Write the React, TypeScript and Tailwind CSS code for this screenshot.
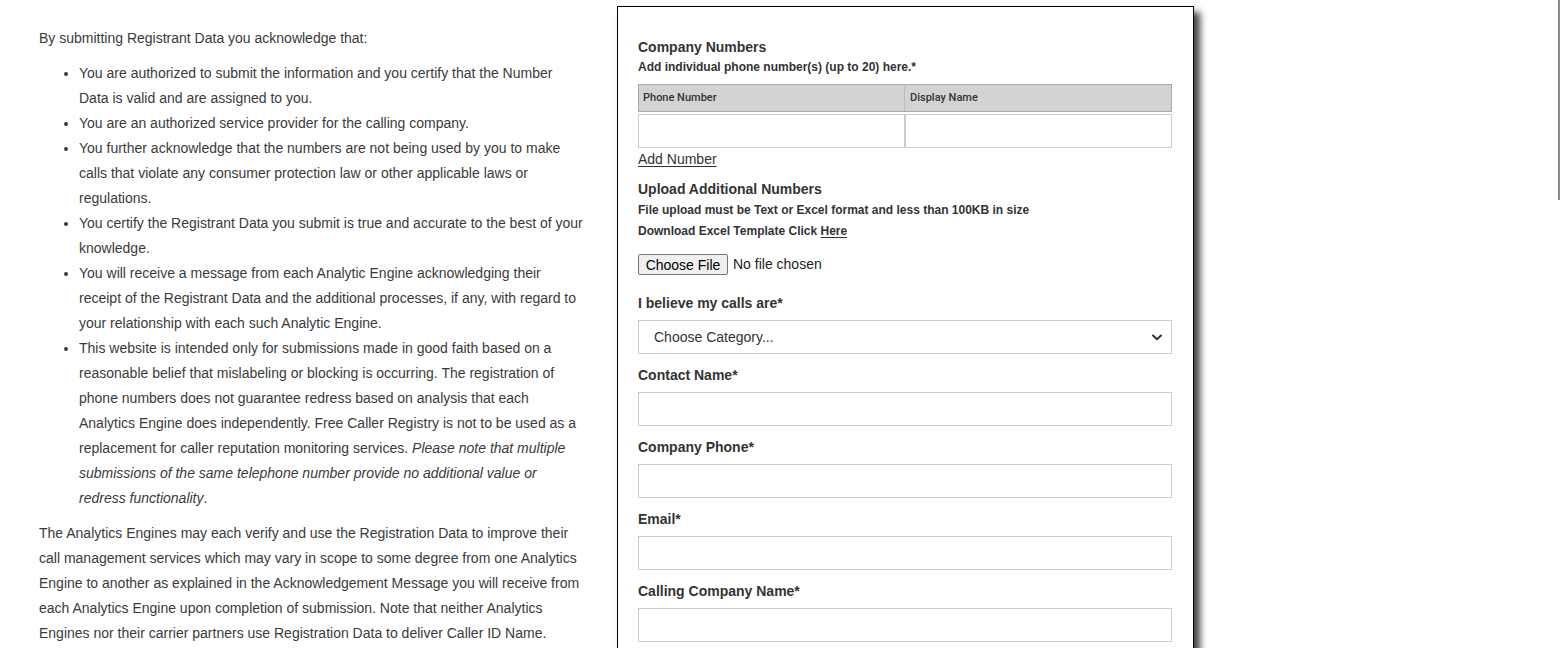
const bullets: React.ReactNode[] = [
  "You are authorized to submit the information and you certify that the Number Data is valid and are assigned to you.",
  "You are an authorized service provider for the calling company.",
  "You further acknowledge that the numbers are not being used by you to make calls that violate any consumer protection law or other applicable laws or regulations.",
  "You certify the Registrant Data you submit is true and accurate to the best of your knowledge.",
  "You will receive a message from each Analytic Engine acknowledging their receipt of the Registrant Data and the additional processes, if any, with regard to your relationship with each such Analytic Engine.",
  <>
    This website is intended only for submissions made in good faith based on a reasonable belief that mislabeling or
    blocking is occurring. The registration of phone numbers does not guarantee redress based on analysis that each
    Analytics Engine does independently. Free Caller Registry is not to be used as a replacement for caller reputation
    monitoring services.{" "}
    <em>
      Please note that multiple submissions of the same telephone number provide no additional value or redress
      functionality
    </em>
    .
  </>,
];

function Field({ label }: { label: string }) {
  return (
    <div className="mt-[11px]">
      <div className="text-[14px] font-bold leading-[20px] text-[#333]">{label}</div>
      <input className="mt-[7px] block h-[34px] w-full border border-[#ccc] bg-white outline-none" />
    </div>
  );
}

export default function App() {
  return (
    <div className="relative min-h-[648px] bg-white font-['Liberation_Sans',Arial,sans-serif] text-[#333]">
      {/* scroll thumb at right edge */}
      <div className="fixed right-0 top-0 h-[200px] w-[2px] bg-[#8c8c8c]" />

      <div className="flex items-start pl-[39px] pt-[6px]">
        {/* Terms column */}
        <div className="mr-[32px] mt-[20px] w-[546px] shrink-0 text-[14px] leading-[25px] text-[#3a3a3a]">
          <p>By submitting Registrant Data you acknowledge that:</p>
          <ul className="my-[10px] list-disc pl-[40px]">
            {bullets.map((b, i) => (
              <li key={i}>{b}</li>
            ))}
          </ul>
          <p>
            The Analytics Engines may each verify and use the Registration Data to improve their call management services
            which may vary in scope to some degree from one Analytics Engine to another as explained in the Acknowledgement
            Message you will receive from each Analytics Engine upon completion of submission. Note that neither Analytics
            Engines nor their carrier partners use Registration Data to deliver Caller ID Name.
          </p>
        </div>

        {/* Form panel */}
        <div className="w-[577px] shrink-0 border border-black bg-white pb-[40px] pl-[20px] pr-[21px] pt-[30px] shadow-[6px_6px_7px_rgba(0,0,0,0.75)]">
          <div className="text-[14px] font-bold leading-[20px]">Company Numbers</div>
          <div className="text-[12px] font-bold leading-[20px]">Add individual phone number(s) (up to 20) here.*</div>

          <div className="mt-[7px] flex h-[28px] border border-[#aaa] bg-[#d3d3d3] pt-px font-['Roboto',sans-serif] text-[11px] font-medium text-[#333]">
            <div className="flex w-[266px] items-center border-r border-[#bbb] pl-[4px]">Phone Number</div>
            <div className="flex flex-1 items-center pl-[5px]">Display Name</div>
          </div>
          <div className="mt-[2px] flex">
            <input className="block h-[34px] w-[267px] border border-[#ccc] outline-none" />
            <input className="block h-[34px] flex-1 border border-[#ccc] outline-none" />
          </div>
          <a className="mt-px block text-[14px] leading-[20px] underline underline-offset-2">Add Number</a>

          <div className="mt-[10px] text-[14px] font-bold leading-[20px]">Upload Additional Numbers</div>
          <div className="mt-px text-[12px] font-bold leading-[20px]">
            File upload must be Text or Excel format and less than 100KB in size
          </div>
          <div className="mt-px text-[12px] font-bold leading-[20px]">
            Download Excel Template Click <span className="underline underline-offset-2">Here</span>
          </div>

          <div className="mt-[12px] flex items-center">
            <button className="h-[21px] w-[90px] rounded-[2px] border border-[#767676] bg-[#efefef] pt-px text-[14px] leading-[19px] text-black">
              Choose File
            </button>
            <span className="ml-[5px] pt-px text-[14px] text-[#222]">No file chosen</span>
          </div>

          <div className="mt-[18px] text-[14px] font-bold leading-[20px]">I believe my calls are*</div>
          <div className="mt-[7px] flex h-[34px] items-center justify-between border border-[#ccc] pl-[15px] pr-[9px] pt-px text-[14px] text-[#333]">
            <span>Choose Category...</span>
            <svg width="10" height="7" viewBox="0 0 10 7" fill="none">
              <path d="M1 1.5 L5 5.2 L9 1.5" stroke="#333" strokeWidth="2" strokeLinecap="round" strokeLinejoin="round" />
            </svg>
          </div>

          <Field label="Contact Name*" />
          <Field label="Company Phone*" />
          <Field label="Email*" />
          <Field label="Calling Company Name*" />
        </div>
      </div>
    </div>
  );
}
